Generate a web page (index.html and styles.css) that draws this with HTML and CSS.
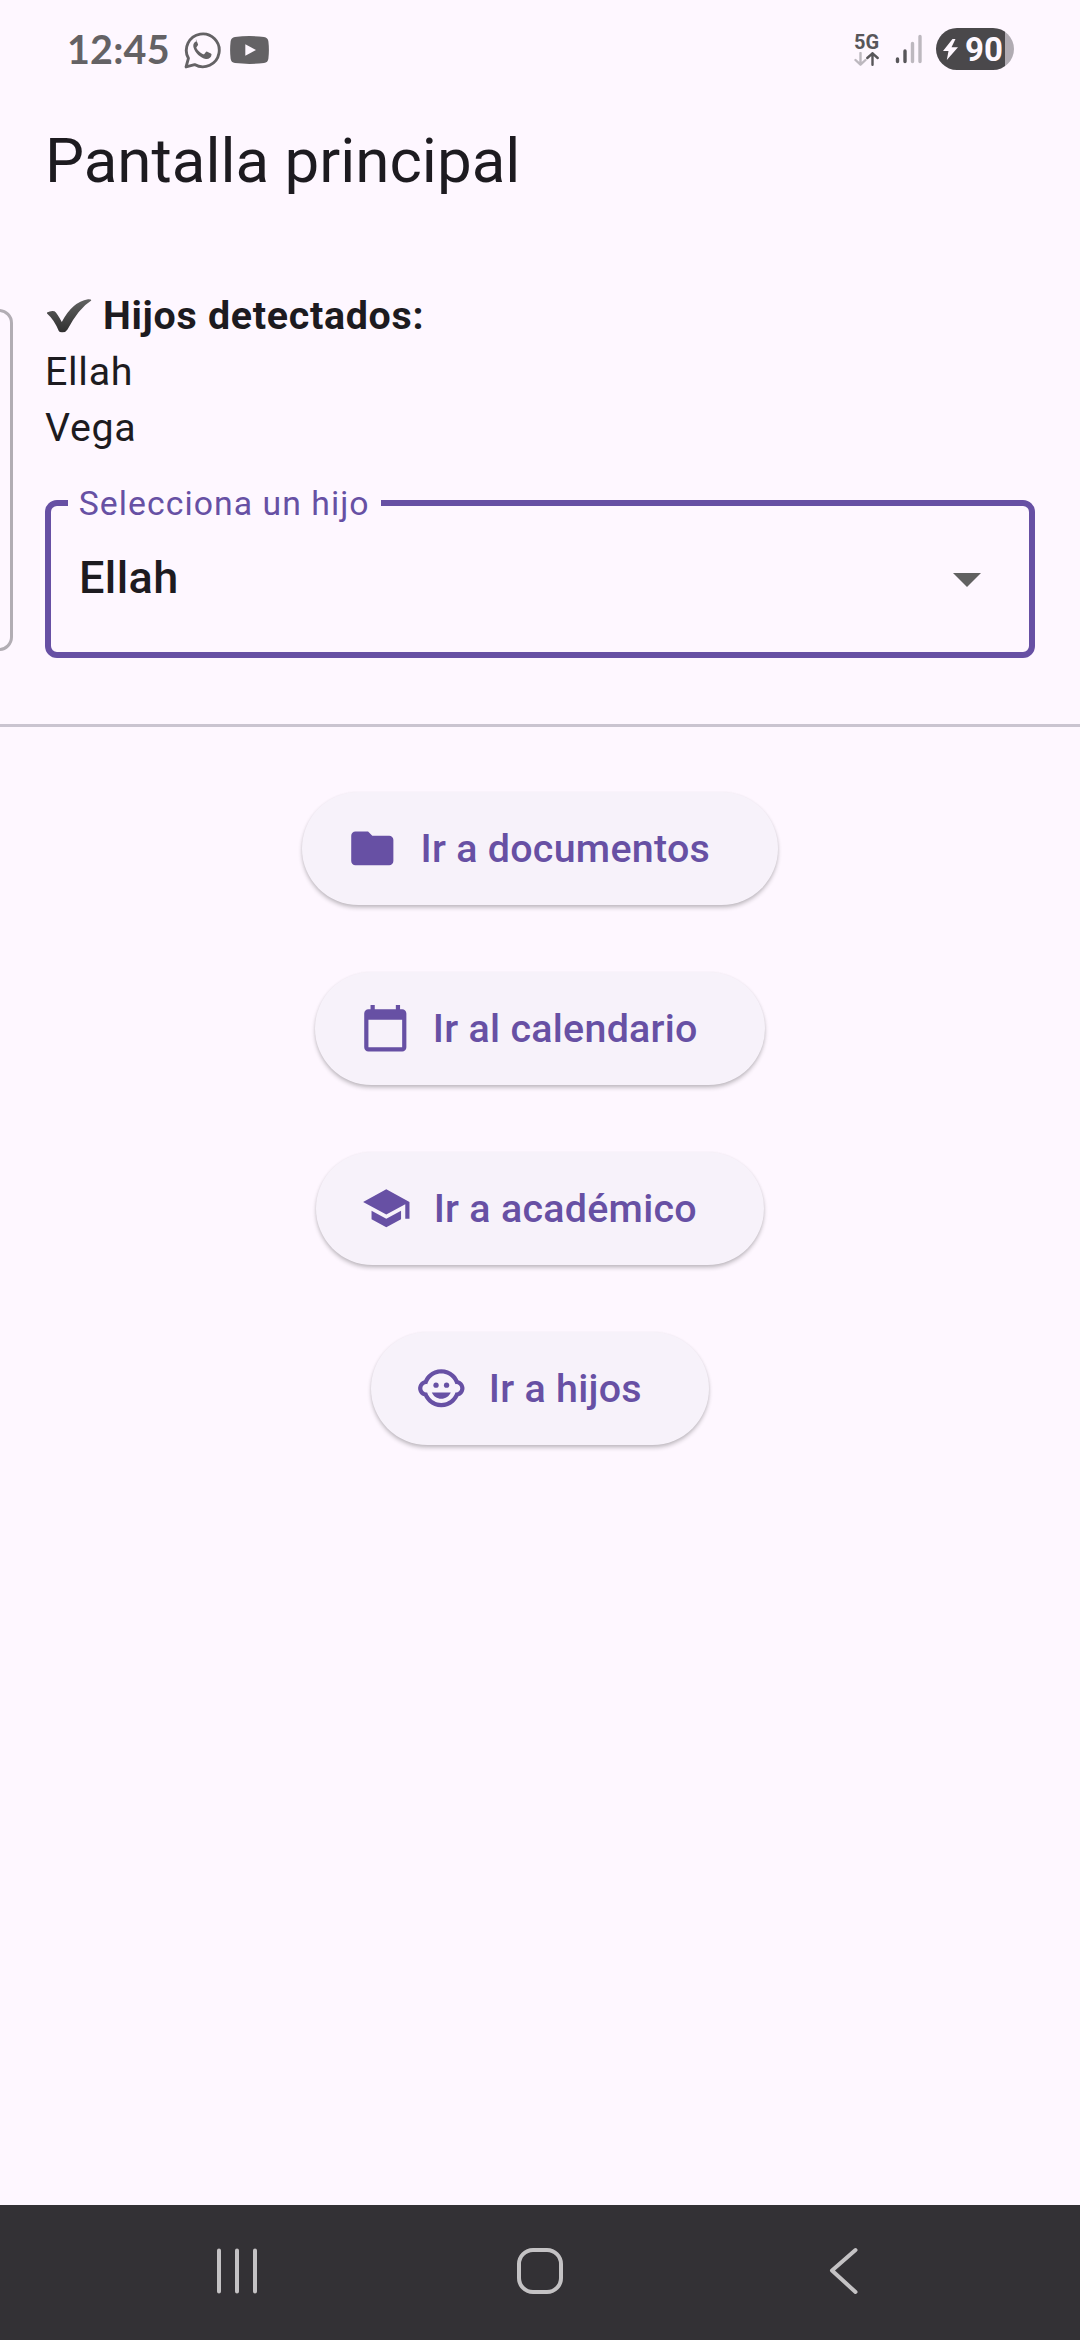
FILE: index.html
```html
<!DOCTYPE html>
<html lang="es">
<head>
<meta charset="utf-8">
<title>Pantalla principal</title>
<link rel="stylesheet" href="styles.css">
</head>
<body>
<header class="status">
  <div class="status-left">
    <span class="clock">12:45</span>
    <svg class="whatsapp" viewBox="0 0 36 36"><path d="M2 34 4.3 25.6A16 16 0 1 1 10.3 31.7Z" fill="none" stroke="#646265" stroke-width="2.8" stroke-linejoin="round"/><path d="M12.4 9.8c-.6-.2-1.6 0-2.2.8-1 1.200-1.500 2.600-.9 4.800 1.500 5.200 6.700 10.200 12 11.300 2.700.4 5.300-1.300 5.500-4.300 0-.6-.2-.8-.7-1.100l-3.500-1.700c-.6-.3-.9-.1-1.300.3l-1.500 1.900c-.3.400-.7.400-1.200.200-3-1.300-5.100-3.300-6.500-6-.2-.5-.1-.8.200-1.100l1.200-1.500c.3-.400.300-.8.100-1.200l-1.400-3.600c-.1-.4-.3-.7-.8-.8z" transform="translate(0 -.4)" fill="#646265"/></svg>
    <svg class="youtube" viewBox="0 0 39 28"><path d="M5 .9Q19.500-.7 34 .9 38 1.400 38.400 5.500 39.400 14 38.400 22.500 38 26.600 34 27.100 19.500 28.700 5 27.100 1 26.600.6 22.500-.4 14 .6 5.500 1 1.400 5 .9Z" fill="#646265"/><path d="M15.300 8.300 26 14 15.300 19.700Z" fill="#fef7ff"/></svg>
  </div>
  <div class="status-right">
    <div class="network">
      <span class="network-type">5G</span>
      <svg class="traffic" viewBox="0 0 25 14" fill="none" stroke-width="2.400" stroke-linecap="round" stroke-linejoin="round"><path d="M6.500 1v11.500M1.500 8l5 4.700L11.500 8" stroke="#bdb8bf"/><path d="M18.500 12.800V1.300M13.300 6l5.200-4.700L23.700 6" stroke="#58565a"/></svg>
    </div>
    <svg class="signal" viewBox="0 0 28 30" stroke-width="3.400" stroke-linecap="round"><path d="M2.500 25v2.500M10 17v10.500" stroke="#58565a"/><path d="M17.500 9.500v18M25 2.500v25" stroke="#bdb8bf"/></svg>
    <div class="battery">
      <svg class="bolt" viewBox="0 0 15 21"><path d="M9.500 0 0 12h5.500L3.800 21 15 8.200H8.500L12.500 0Z" fill="#fef7ff"/></svg>
      <span>90</span>
    </div>
  </div>
</header>

<main class="screen">
  <h1 class="title">Pantalla principal</h1>
  <section class="children">
    <div class="previous-card"></div>
    <p class="children-heading">
      <svg class="check" viewBox="0 0 46 34"><defs><linearGradient id="check-fill" x1="0" y1="0" x2="0" y2="1"><stop offset="0" stop-color="#626262"/><stop offset="1" stop-color="#303030"/></linearGradient></defs><path d="M1 13.500Q5 11.200 8.500 12.200 11 14 15.800 23 26 3 42 .2 45.500 0 45.300 1.500 33 9 21.500 30.500 20 33.200 16.500 33.300 13.500 33.500 12.800 32 8 20.500 1 14.500Z" fill="url(#check-fill)"/></svg>
      <strong>Hijos detectados:</strong>
    </p>
    <p>Ellah</p>
    <p>Vega</p>
  </section>
  <fieldset class="select">
    <legend>Selecciona un hijo</legend>
    <div class="select-value">
      <span>Ellah</span>
      <svg class="arrow" viewBox="0 0 28 14"><path d="M0 0h28L14 14Z" fill="#616161"/></svg>
    </div>
  </fieldset>
  <hr class="divider">
  <nav class="actions">
    <button class="action"><svg viewBox="0 0 24 24"><path d="M10 4H4c-1.100 0-1.990.9-1.990 2L2 18c0 1.100.9 2 2 2h16c1.100 0 2-.9 2-2V8c0-1.100-.9-2-2-2h-8l-2-2z"/></svg><span>Ir a documentos</span></button>
    <button class="action"><svg viewBox="0 0 24 24"><path d="M20 3h-1V1h-2v2H7V1H5v2H4c-1.100 0-2 .9-2 2v16c0 1.100.9 2 2 2h16c1.100 0 2-.9 2-2V5c0-1.100-.9-2-2-2zm0 18H4V8h16v13z"/></svg><span>Ir al calendario</span></button>
    <button class="action"><svg viewBox="0 0 24 24"><path d="M5 13.180v4L12 21l7-3.820v-4L12 17l-7-3.820zM12 3L1 9l11 6 9-4.910V17h2V9L12 3z"/></svg><span>Ir a académico</span></button>
    <button class="action"><svg viewBox="0 0 24 24"><circle cx="14.500" cy="10.500" r="1.250"/><circle cx="9.500" cy="10.500" r="1.250"/><path d="M22.940 12.660c.04-.21.060-.43.060-.66s-.02-.45-.06-.66c-.25-1.510-1.360-2.740-2.810-3.170-.53-1.120-1.280-2.100-2.190-2.910C16.360 3.850 14.280 3 12 3s-4.360.85-5.940 2.260c-.92.810-1.670 1.800-2.190 2.910-1.450.43-2.560 1.650-2.810 3.170-.04.210-.06.430-.06.660s.02.450.06.660c.25 1.510 1.360 2.740 2.810 3.170.52 1.110 1.270 2.090 2.170 2.890C7.620 20.140 9.710 21 12 21s4.380-.86 5.970-2.280c.9-.8 1.650-1.790 2.170-2.890 1.440-.43 2.550-1.650 2.800-3.170zM19 14c-.1 0-.19-.02-.29-.03-.2.670-.49 1.290-.86 1.860C16.600 17.740 14.450 19 12 19s-4.600-1.260-5.850-3.170c-.37-.57-.66-1.190-.86-1.860-.1.010-.19.030-.29.030-1.100 0-2-.9-2-2s.9-2 2-2c.1 0 .19.020.29.030.2-.67.490-1.290.86-1.860C7.400 6.260 9.550 5 12 5s4.600 1.260 5.850 3.170c.37.570.66 1.190.86 1.860.1-.01.19-.03.290-.03 1.100 0 2 .9 2 2s-.9 2-2 2zM7.500 14c.76 1.770 2.490 3 4.500 3s3.740-1.230 4.500-3h-9z"/></svg><span>Ir a hijos</span></button>
  </nav>
</main>

<footer class="system-nav">
  <svg viewBox="0 0 48 48"><path d="M6 3.500v41M24 3.500v41M42 3.500v41"/></svg>
  <svg viewBox="0 0 48 48"><rect x="3" y="3" width="42" height="42" rx="14"/></svg>
  <svg viewBox="0 0 48 48"><path d="M36.500 3 13 23.500 36.500 45"/></svg>
</footer>
</body>
</html>
```
FILE: styles.css
```css
* { box-sizing: border-box; }

body {
  margin: 0;
  width: 1080px;
  height: 2340px;
  display: flex;
  flex-direction: column;
  overflow: hidden;
  background: #fef7ff;
  color: #1d1b20;
  font-family: Roboto, "Noto Sans", sans-serif;
}

svg { display: block; flex: none; }
p, h1 { margin: 0; }

/* Status bar */
.status {
  height: 98px;
  padding: 0 66px;
  display: flex;
  justify-content: space-between;
}
.status-left, .status-right { display: flex; height: 98px; align-items: center; }
.clock {
  width: 118px;
  padding-left: 1px;
  font: 700 39.500px/44px Lato, sans-serif;
  letter-spacing: 0.200px;
  color: #646265;
}
.whatsapp { width: 37px; height: 37px; margin-top: 2px; }
.youtube { width: 39px; height: 28px; margin-left: 9px; margin-top: 2px; }
.network {
  width: 26px;
  margin-right: 15px;
  display: flex;
  flex-direction: column;
}
.network-type {
  font-size: 20px;
  font-weight: 700;
  line-height: 20px;
  color: #58565a;
}
.traffic { width: 25px; height: 14px; }
.signal { width: 28px; height: 30px; margin-right: 13px; }
.battery {
  width: 78px;
  height: 42px;
  padding-left: 7px;
  display: flex;
  align-items: center;
  gap: 7px;
  border-radius: 21px;
  background: linear-gradient(90deg, #4a484b 69.500px, #b0abb2 69.500px);
  color: #fef7ff;
  font-size: 33px;
  font-weight: 700;
}
.bolt { width: 15px; height: 21px; }

/* Content */
.screen { flex: 1; }
.title {
  padding: 23px 45px 0;
  font-size: 61.880px;
  font-weight: 400;
  line-height: 80px;
}
.children {
  position: relative;
  padding: 86.700px 45px 0;
  font-size: 39.380px;
  line-height: 56.250px;
  letter-spacing: 0.700px;
}
.children-heading { display: flex; }
.check { width: 46px; height: 34px; margin: 11px 11px 0 1px; }

/* Edge of the card that sits to the left of the viewport */
.previous-card {
  position: absolute;
  left: -60px;
  top: 108px;
  width: 73px;
  height: 342px;
  border: 3px solid #b2adb4;
  border-radius: 14px;
}

.select {
  height: 175.600px;
  margin: 25.500px 45px 0;
  padding: 0 28px;
  border: 6px solid #6750a4;
  border-radius: 12px;
  min-width: 0;
}
.select legend {
  margin-left: -11.500px;
  padding: 1.600px 11.250px 0;
  color: #6750a4;
  font-size: 33.750px;
  line-height: 40px;
  letter-spacing: 1.050px;
}
.select-value {
  display: flex;
  align-items: center;
  justify-content: space-between;
  padding: 24.500px 20px 0 0;
  font-size: 45px;
  font-weight: 500;
  line-height: 60px;
  letter-spacing: 0.420px;
}
.arrow { width: 28px; height: 14px; margin-top: 4px; }

.divider {
  height: 3px;
  margin: 66px 0 0;
  border: 0;
  background: #cac4d0;
}

.actions {
  padding-top: 65.500px;
  display: flex;
  flex-direction: column;
  align-items: center;
  gap: 67.500px;
}
.action {
  height: 112.500px;
  padding: 0 67.500px 0 45px;
  display: flex;
  align-items: center;
  gap: 22.500px;
  border: 0;
  border-radius: 57px;
  background: #f7f2fa;
  box-shadow: 0 3px 4px rgba(0, 0, 0, 0.200), 0 1px 3px rgba(0, 0, 0, 0.080);
  color: #6750a4;
  font: 500 39.380px/56px Roboto, sans-serif;
  letter-spacing: 0.280px;
}
.action span { padding-top: 2px; }
.action svg { width: 50.600px; height: 50.600px; fill: currentColor; }

/* System navigation */
.system-nav {
  height: 135px;
  padding: 0 213px 3px;
  display: flex;
  align-items: center;
  justify-content: space-between;
  background: #333135;
}
.system-nav svg {
  width: 48px;
  height: 48px;
  fill: none;
  stroke: #c4c2c4;
  stroke-width: 4;
  stroke-linecap: round;
  stroke-linejoin: round;
}
```
